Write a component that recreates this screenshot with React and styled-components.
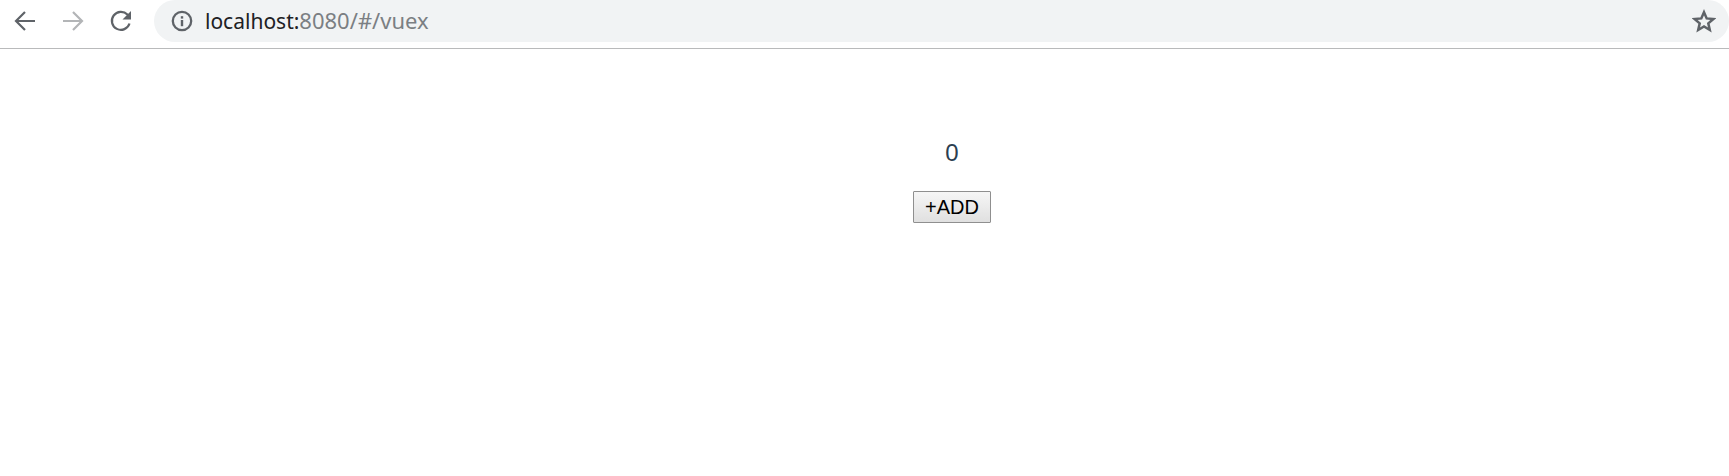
import React from "react";
import styled, { createGlobalStyle } from "styled-components";

const Global = createGlobalStyle`
  html, body { margin: 0; padding: 0; background: #fff; }
  body { font-family: "Liberation Sans", Arial, sans-serif; }
`;

const Page = styled.div`
  width: 1729px;
  height: 476px;
  display: flex;
  flex-direction: column;
  overflow: hidden;
`;

const Toolbar = styled.header`
  height: 48px;
  flex: none;
  display: flex;
  align-items: flex-start;
  padding-left: 13px;
  border-bottom: 1px solid #b9babb;
`;

const NavGroup = styled.nav`
  display: flex;
  gap: 24px;
  width: 141px;
  padding-top: 9px;
  flex: none;
`;

const NavIcon = styled.svg`
  width: 24px;
  height: 24px;
  display: block;
  fill: none;
  stroke: ${(p) => (p.$dim ? "#b3b5b7" : "#5f6368")};
  stroke-width: 2.2;
`;

const Omnibox = styled.div`
  flex: 1;
  height: 42px;
  background: #f1f3f4;
  border-radius: 21px;
  display: flex;
  align-items: center;
  padding-left: 17px;
  padding-right: 13px;
`;

const InfoIcon = styled.svg`
  width: 22px;
  height: 22px;
  flex: none;
  margin-right: 12px;
`;

const Url = styled.div`
  flex: 1;
  font-family: "Noto Sans", "Open Sans", sans-serif;
  font-size: 22px;
  line-height: 40px;
  padding-bottom: 2px;
  color: #7b7f83;
  white-space: nowrap;
`;

const Host = styled.span`
  color: #202124;
  font-size: 21px;
`;

const StarIcon = styled.svg`
  width: 24px;
  height: 24px;
  flex: none;
  fill: none;
  stroke: #5f6368;
  stroke-width: 2.5;
  stroke-linejoin: miter;
`;

const Content = styled.main`
  flex: 1;
  display: flex;
  flex-direction: column;
  align-items: center;
  padding-top: 92px;
  padding-left: 175px;
`;

const Count = styled.div`
  font-family: "Liberation Sans", Arial, sans-serif;
  font-size: 24px;
  line-height: 24px;
  color: #2c3e50;
  margin-bottom: 26px;
`;

const AddButton = styled.button`
  width: 78px;
  height: 32px;
  padding: 0;
  box-sizing: border-box;
  font-family: "Liberation Sans", Arial, sans-serif;
  font-size: 20px;
  color: #000;
  border: 1px solid #8f8f8f;
  border-radius: 1px;
  background: linear-gradient(#f6f6f6, #e0e0e0);
`;

export default function App() {
  return (
    <Page>
      <Global />
      <Toolbar>
        <NavGroup>
          <NavIcon viewBox="0 0 24 24">
            <path d="M22 12H3.5M12 3l-9 9 9 9" />
          </NavIcon>
          <NavIcon viewBox="0 0 24 24" $dim>
            <path d="M2 12h18.5M12 3l9 9-9 9" />
          </NavIcon>
          <NavIcon viewBox="0 0 24 24">
            <path d="M20.5 14.5A9 9 0 1 1 18.4 5.6L21 8.6" />
            <path d="M22 2v8.5h-8.5z" fill="#5f6368" stroke="none" />
          </NavIcon>
        </NavGroup>
        <Omnibox>
          <InfoIcon viewBox="0 0 22 22">
            <circle cx="11" cy="11" r="9.2" fill="none" stroke="#5f6368" strokeWidth="2.3" />
            <rect x="9.8" y="10" width="2.4" height="6.2" fill="#5f6368" />
            <rect x="9.8" y="6.2" width="2.4" height="2.4" fill="#5f6368" />
          </InfoIcon>
          <Url>
            <Host>localhost:</Host>8080/#/vuex
          </Url>
          <StarIcon viewBox="0 0 24 24">
            <path d="M12 3.2l2.7 6.2 6.7.6-5.1 4.4 1.5 6.6L12 17.5 6.2 21l1.5-6.6L2.6 10l6.7-.6z" />
          </StarIcon>
        </Omnibox>
      </Toolbar>
      <Content>
        <Count>0</Count>
        <AddButton>+ADD</AddButton>
      </Content>
    </Page>
  );
}
